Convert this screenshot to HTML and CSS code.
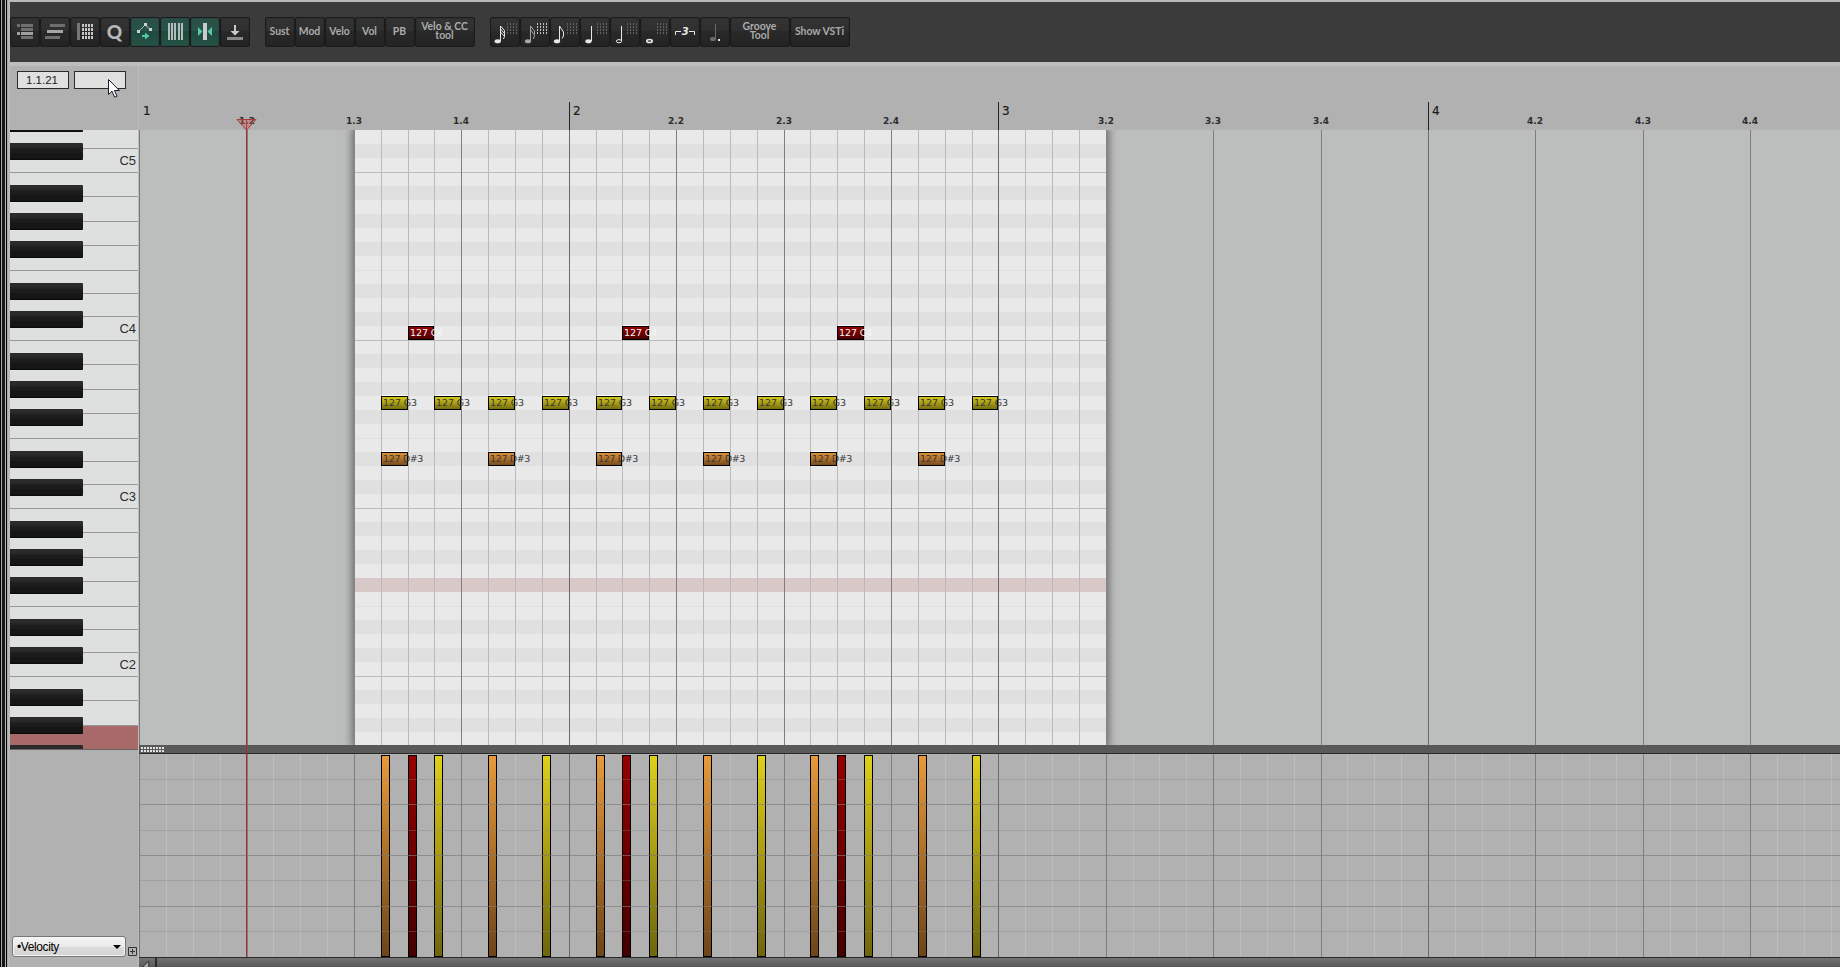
FILE: index.html
```html
<!DOCTYPE html>
<html lang="en">
<head>
  <meta charset="UTF-8">
  <title>MIDI Editor</title>
  <link rel="stylesheet" href="styles.css">
</head>
<body>
  <div class="rail"></div>
  <div class="editor">
    <div class="toolbar">
      <div class="group">
        <button class="btn icon"><svg viewBox="0 0 30 30"><path fill="#707070" d="M7 7h3v3h-3zM11 7h12v3h-12zM11 11h12v3h-12zM11 19h12v3h-12z"/><path fill="#a0a0a0" d="M7 15h3v3h-3zM11 15h12v3h-12z"/></svg></button>
        <button class="btn icon"><svg viewBox="0 0 30 30"><path fill="#6e6e6e" d="M10 7h15v3h-15zM5 19h15v3h-15z"/><path fill="#a4a4a4" d="M7 13h16v3h-16z"/></svg></button>
        <button class="btn icon"><svg viewBox="0 0 30 30"><path fill="#777" d="M7 6h3v17h-3z"/><path fill="#c8c8c8" d="M12 7h2v3h-2zM15 7h2v3h-2zM18 7h2v3h-2zM21 7h2v3h-2zM12 11h2v3h-2zM15 11h2v3h-2zM18 11h2v3h-2zM21 11h2v3h-2zM12 15h2v3h-2zM15 15h2v3h-2zM18 15h2v3h-2zM21 15h2v3h-2zM12 19h2v3h-2zM15 19h2v3h-2zM18 19h2v3h-2zM21 19h2v3h-2z"/></svg></button>
        <button class="btn quant">Q</button>
        <button class="btn icon on"><svg class="smooth" viewBox="0 0 30 30"><path fill="none" stroke="#b0b8b5" d="M8.500 14.500L15 8l6 5"/><path fill="#d0d0d0" d="M7 13h3v3h-3zM14 6h3v3h-3zM19 11h3v3h-3z"/><path fill="#58c8a8" d="M12 18h3v-2.500l4.500 3.500-4.500 3.500V20h-3z"/></svg></button>
        <button class="btn icon on"><svg viewBox="0 0 30 30"><path fill="#b4bdba" d="M8 6h2v17h-2zM11 6h2v17h-2zM14 6h2v17h-2zM18 6h2v17h-2zM21 6h2v17h-2z"/></svg></button>
        <button class="btn icon on"><svg class="smooth" viewBox="0 0 30 30"><path fill="#c8cccb" d="M13 6h4v17h-4z"/><path fill="#58c8a8" d="M8 10l4.500 4.500L8 19zM22 10l-4.500 4.500L22 19z"/></svg></button>
        <button class="btn icon"><svg class="smooth" viewBox="0 0 30 30"><path fill="#c8c8c8" d="M14 8h2v6h3.500L15 18.500 10.500 14H14z"/><path fill="#888" d="M7 20h16v3h-16z"/></svg></button>
      </div>
      <div class="group">
        <button class="btn">Sust</button>
        <button class="btn">Mod</button>
        <button class="btn">Velo</button>
        <button class="btn">Vol</button>
        <button class="btn">PB</button>
        <button class="btn wide">Velo &amp; CC<br>tool</button>
      </div>
      <div class="group">
        <button class="btn icon"><svg class="smooth" viewBox="0 0 30 30"><path class="dash" d="M17.500 6v11M20.500 6v11M23.500 6v11M26.500 6v11"/><ellipse class="head" cx="7.700" cy="24.300" rx="3.100" ry="2"/><path class="stem" d="M10.500 24V9l4 4.500v3M10.500 12l4 4.500v3M10.500 15l4 4.500-1 2.500"/></svg></button>
        <button class="btn icon"><svg class="smooth" viewBox="0 0 30 30"><path class="dash lit" d="M17.500 6v11M20.500 6v11M23.500 6v11M26.500 6v11"/><ellipse class="head dim" cx="8" cy="24.300" rx="3.100" ry="2"/><path class="stem dim" d="M10.500 24V9l4 5v3M10.500 13l4 5-1 4"/></svg></button>
        <button class="btn icon"><svg class="smooth" viewBox="0 0 30 30"><path class="dash" d="M17.500 6v11M20.500 6v11M23.500 6v11M26.500 6v11"/><ellipse class="head" cx="7" cy="24.300" rx="3.100" ry="2"/><path class="stem" d="M9.500 24V9l4 6v4l-1.500 2.500"/></svg></button>
        <button class="btn icon"><svg class="smooth" viewBox="0 0 30 30"><path class="dash" d="M17.500 6v11M20.500 6v11M23.500 6v11M26.500 6v11"/><ellipse class="head" cx="8.500" cy="24.300" rx="3.100" ry="2"/><path class="stem" d="M11.500 24V9"/></svg></button>
        <button class="btn icon"><svg class="smooth" viewBox="0 0 30 30"><path class="dash" d="M17.500 6v11M20.500 6v11M23.500 6v11M26.500 6v11"/><ellipse class="ring" cx="9" cy="24.200" rx="2.700" ry="1.600"/><path class="stem" d="M11.500 24V9"/></svg></button>
        <button class="btn icon"><svg class="smooth" viewBox="0 0 30 30"><path class="dash" d="M17.500 6v11M20.500 6v11M23.500 6v11M26.500 6v11"/><ellipse class="ring fat" cx="9.500" cy="24" rx="2.700" ry="1.500"/></svg></button>
        <button class="btn icon"><svg class="smooth" viewBox="0 0 30 30"><path class="stem" d="M5.500 18v-3.500H11M19 14.500h5.500V18"/><text x="15.200" y="18" class="three">3</text></svg></button>
        <button class="btn icon"><svg class="smooth" viewBox="0 0 30 30"><ellipse cx="13" cy="22" rx="3" ry="2" fill="#6a6a6a"/><path fill="none" stroke="#6a6a6a" d="M15.500 22V7"/><path fill="#e8e8e8" d="M18 22h2v2h-2z"/></svg></button>
        <button class="btn wide">Groove<br>Tool</button>
        <button class="btn wide">Show VSTi</button>
      </div>
    </div>

    <div class="workspace">
      <div class="side">
        <div class="readouts">
          <div class="readout">1.1.21</div>
          <div class="readout"></div>
        </div>
        <div class="keyboard" id="keyboard"></div>
        <div class="lane-controls">
          <div class="lane-select"><span>•Velocity</span><i class="caret"></i></div>
          <svg class="plus" viewBox="0 0 9 9"><path fill="none" stroke="#333" d="M.5.5h8v8h-8zM4.500 2v5M2 4.500h5"/></svg>
        </div>
      </div>
      <div class="timeline">
        <div class="ruler" id="ruler"></div>
        <div class="roll" id="roll">
          <div class="item" id="item">
            <div class="rows" id="rows"></div>
          </div>
        </div>
        <div class="splitter"><i class="grip"></i></div>
        <div class="lane" id="lane"></div>
        <div class="scrollbar"><svg class="scroll-left" viewBox="0 0 18 9"><path fill="#aaa" stroke="#2a2a2a" d="M11 3L5 8.500V10h6z"/></svg></div>
        <div class="playhead"><svg viewBox="0 0 21 12"><path fill="#cc5a5a" fill-opacity=".4" stroke="#a83c3c" d="M1 .5h19L10.500 11z"/></svg></div>
      </div>
    </div>
  </div>
  <svg class="cursor" viewBox="0 0 13 20"><path fill="#fff" stroke="#1a1a2a" d="M.5.5v15l3.500-3.300 2.600 6 2.400-1-2.600-5.700h5z"/></svg>
  <script src="script.js"></script>
</body>
</html>
```
FILE: styles.css
```css
* {
  box-sizing: border-box;
}

body {
  margin: 0;
  width: 1840px;
  height: 967px;
  display: flex;
  overflow: hidden;
  background: #b1b1b1;
  font-family: "Liberation Sans", Arial, sans-serif;
}

.rail {
  width: 10px;
  background: linear-gradient(90deg, #000 1px, #aaa 1px 2px, #161616 2px 5px, #b5b5b5 5px 6px, #000 6px 7px, #a8adad 7px 8px, #b9b9b9 8px);
}

.editor {
  flex: 1;
  display: flex;
  flex-direction: column;
  min-width: 0;
}

/* toolbar */
.toolbar {
  height: 66px;
  border-top: 2px solid #b9b9b9;
  border-bottom: 4px solid #bebebe;
  background: #3b3b3b;
  display: flex;
  align-items: center;
  gap: 15px;
}

.group {
  display: flex;
}

.btn {
  width: 30px;
  height: 30px;
  padding: 0 1px 2px 0;
  border: 1px solid #1b1b1b;
  border-radius: 2px;
  background: linear-gradient(#333 0, #2f2f2f 45%, #292929 46%, #242424);
  box-shadow: inset 0 0 1px #1b1b1b;
  color: #ababab;
  font: bold 10.4px/9px Lato, sans-serif;
  text-align: center;
  white-space: nowrap;
}

.btn.icon {
  padding: 0;
}

.btn.wide {
  width: 60px;
}

.btn.on {
  background: linear-gradient(#2a4f45, #275448 45%, #1e4a3e 46%, #265246);
}

.btn.quant {
  font-size: 19px;
  font-weight: 900;
  color: #b8b8b8;
}

.btn svg {
  display: block;
  width: 30px;
  height: 30px;
  margin: -1px;
  shape-rendering: crispEdges;
}

.btn .smooth {
  shape-rendering: auto;
}

.dash {
  stroke: #626262;
  stroke-dasharray: 2 1;
}

.dash.lit {
  stroke: #c4c4c4;
}

.head {
  fill: #e8e8e8;
}

.stem {
  fill: none;
  stroke: #e8e8e8;
}

.head.dim {
  fill: #a6a6a6;
}

.stem.dim {
  stroke: #a6a6a6;
}

.ring {
  fill: none;
  stroke: #e8e8e8;
}

.ring.fat {
  stroke-width: 1.6;
}

.three {
  fill: #e8e8e8;
  font: italic bold 10px "DejaVu Sans", sans-serif;
  text-anchor: middle;
}

/* left column */
.workspace {
  flex: 1;
  display: flex;
  min-height: 0;
}

.side {
  width: 128px;
  display: flex;
  flex-direction: column;
}

.readouts {
  height: 64px;
  display: flex;
  gap: 5px;
  padding: 5px 7px;
}

.readout {
  width: 52px;
  height: 18px;
  border: 1px solid #2a2a2a;
  background: #e0e0e0;
  color: #222;
  font-size: 11.5px;
  line-height: 17px;
  padding-right: 2px;
  text-align: center;
}

.keyboard {
  position: relative;
  height: 620px;
  overflow: hidden;
  border-bottom: 1px solid #666;
}

.key {
  background: #dee0df;
  border-bottom: 1px solid #979797;
  color: #2c2c2c;
  font-size: 13px;
  line-height: 23px;
  text-align: right;
  padding-right: 2px;
}

.key.pressed {
  background: #aa6969;
  border-color: #aa6969;
}

.black-key {
  position: absolute;
  left: 0;
  width: 73px;
  height: 17px;
  border-radius: 0 1px 1px 0;
  background: linear-gradient(#2b2b2b 0 4px, #242424 4px 6px, #1c1c1c 6px 10px, #161616 10px 15px, #080808);
}

.lane-controls {
  flex: 1;
  display: flex;
  align-items: flex-end;
  gap: 2px;
  padding: 0 0 10px 2px;
}

.lane-select {
  width: 114px;
  height: 21px;
  border: 1px solid #777;
  border-radius: 3px;
  background: linear-gradient(#f4f4f4, #eaeaea 50%, #dcdcdc 51%, #d3d3d3);
  box-shadow: inset 0 0 0 1px #f4f4f4;
  display: flex;
  align-items: center;
  justify-content: space-between;
  padding: 0 4px;
  font-size: 12px;
  letter-spacing: -0.4px;
}

.caret {
  border: 4px solid transparent;
  border-top-color: #000;
  border-bottom: 0;
}

.plus {
  width: 9px;
  height: 9px;
  margin-bottom: 1px;
}

/* right column */
.timeline {
  flex: 1;
  position: relative;
  display: flex;
  flex-direction: column;
  border-left: 1px solid #bdbdbd;
  min-width: 0;
  overflow: hidden;
}

.ruler,
.roll,
.lane {
  position: relative;
  overflow: hidden;
  border-left: 1px solid #b1b1b1;
}

.ruler {
  height: 64px;
  color: #2c2c2c;
}

.bar-label,
.beat-label {
  position: absolute;
  font-family: "DejaVu Sans", sans-serif;
}

.bar-label {
  top: 36px;
  height: 28px;
  padding-left: 3px;
  font-size: 12px;
  line-height: 18px;
  color: #1c1c1c;
  border-left: 1px solid #222;
  -webkit-text-stroke: 0.2px #1c1c1c;
}

.bar-label.first {
  border-color: transparent;
}

.beat-label {
  top: 49px;
  width: 40px;
  margin-left: -20px;
  text-align: center;
  font-size: 9px;
  font-weight: bold;
  line-height: 13px;
}

.roll {
  height: 615px;
  background: #bbbebc;
  border-color: #777;
}

.item {
  position: absolute;
  top: 0;
  bottom: 0;
  box-shadow: 0 0 0 1px #858585, 0 0 8px 3px #6a6a6a;
}

.rows {
  height: 100%;
  overflow: hidden;
}

.row {
  height: 14px;
  background: #e9e9e9;
}

.row.sharp {
  background: #e0e0e0;
}

.row.octave {
  border-top: 1px solid #bababa;
}

.row.half {
  border-top: 1px solid #e0e0e0;
}

.row.marked {
  background: #d8c8c7;
}

.line {
  position: absolute;
  top: 0;
  bottom: 0;
  width: 1px;
  background: #bababa;
}

.line.beat {
  background: #7f7f7f;
}

.line.bar {
  background: #6a6a6a;
}

.note {
  position: absolute;
  height: 14px;
  border: 1px solid #000;
  color: #383838;
  font: 9.5px/11px "DejaVu Sans", sans-serif;
  letter-spacing: -0.1px;
  padding-left: 1px;
  white-space: nowrap;
}

/* light edge over the top of each note */
.note::before {
  content: "";
  position: absolute;
  top: -2px;
  left: 0;
  right: 0;
  height: 1px;
  background: #fff;
}

.note.g3 {
  background: linear-gradient(#d6c91a, #776e10);
}

.note.ds3 {
  background: linear-gradient(#de9138, #784d1c);
  letter-spacing: -0.35px;
}

.note.c4 {
  background: linear-gradient(#920000, #4c0000);
  color: #f6f6f6;
}

.splitter {
  height: 9px;
  background: #595959;
  border-bottom: 1px solid #2b2b2b;
  padding: 2px 0 0 2px;
}

.grip {
  display: block;
  width: 24px;
  height: 6px;
  background: repeating-linear-gradient(90deg, transparent 0 2px, #595959 2px 3px), repeating-linear-gradient(#e4e4e4 0 2px, #595959 2px 3px);
}

.lane {
  height: 203px;
  border-color: #777;
}

.lane .line:not(.beat) {
  background: #bdbdbd;
}

.level {
  position: absolute;
  left: 0;
  right: 0;
  height: 1px;
  background: rgba(128, 128, 128, 0.35);
}

.level.strong {
  background: rgba(122, 122, 122, 0.65);
}

.velocity {
  position: absolute;
  top: 1px;
  bottom: 0;
  width: 9px;
  border: 1px solid #000;
}

.velocity.g3 {
  background: linear-gradient(#dfd01b, #6e650d);
}

.velocity.ds3 {
  background: linear-gradient(#e89a3a, #6d4519);
}

.velocity.c4 {
  background: linear-gradient(#960000, #430000);
}

.scrollbar {
  flex: 1;
  border-top: 1px solid #2b2b2b;
  background: linear-gradient(#727272, #58595a);
}

.scroll-left {
  display: block;
  width: 18px;
  height: 9px;
  border-right: 2px solid #2b2b2b;
}

.playhead {
  position: absolute;
  top: 53px;
  bottom: 10px;
  left: 107px;
  width: 1px;
  background: #a82c2c;
}

.playhead svg {
  position: absolute;
  left: -10px;
  top: 0;
  width: 21px;
  height: 12px;
}

.cursor {
  position: absolute;
  left: 108px;
  top: 79px;
  width: 13px;
  height: 20px;
}
```
FILE: script.js
```js
// x position of a 16th note inside the timeline
function xAt(n) {
  return Math.floor(139.635 + 26.851 * n) - 140;
}

function add(parent, className, style, text) {
  const el = document.createElement('div');
  el.className = className;
  Object.assign(el.style, style || {});
  if (text) el.textContent = text;
  parent.appendChild(el);
  return el;
}

const ruler = document.getElementById('ruler');
const roll = document.getElementById('roll');
const item = document.getElementById('item');
const rows = document.getElementById('rows');
const lane = document.getElementById('lane');
const keyboard = document.getElementById('keyboard');

const ITEM_START = 8;
const ITEM_END = 36;
const TOP_PITCH = 74;
const ROW = 14;
const SHARPS = [1, 3, 6, 8, 10];

// ruler labels
for (let n = 0; n < 64; n += 4) {
  const bar = Math.floor(n / 16) + 1;
  const beat = (n % 16) / 4 + 1;
  if (beat === 1) {
    add(ruler, n ? 'bar-label' : 'bar-label first', { left: xAt(n) + 'px' }, String(bar));
  } else {
    add(ruler, 'beat-label', { left: xAt(n) + 'px' }, bar + '.' + beat);
  }
}

// pitch rows
item.style.left = xAt(ITEM_START) + 1 + 'px';
item.style.width = xAt(ITEM_END) - xAt(ITEM_START) - 1 + 'px';
for (let pitch = TOP_PITCH; pitch > TOP_PITCH - 44; pitch--) {
  const tone = pitch % 12;
  let cls = 'row';
  if (SHARPS.includes(tone)) cls += ' sharp';
  if (tone === 11) cls += ' octave';
  if (tone === 4) cls += ' half';
  if (pitch === 42) cls += ' marked';
  add(rows, cls);
}

// vertical grid
for (let n = 1; n < 64; n++) {
  const kind = n % 16 === 0 ? ' beat bar' : n % 4 === 0 ? ' beat' : '';
  if ((kind || (n > ITEM_START && n < ITEM_END)) && n !== ITEM_START && n !== ITEM_END) {
    add(roll, 'line' + kind, { left: xAt(n) + 'px' });
  }
  add(lane, 'line' + kind, { left: xAt(n) + 'px' });
}

// notes
const notes = [
  { cls: 'g3', name: 'G3', pitch: 55, at: [9, 11, 13, 15, 17, 19, 21, 23, 25, 27, 29, 31] },
  { cls: 'ds3', name: 'D#3', pitch: 51, at: [9, 13, 17, 21, 25, 29] },
  { cls: 'c4', name: 'C4', pitch: 60, at: [10, 18, 26] }
];
notes.forEach(note => {
  note.at.forEach(n => {
    add(roll, 'note ' + note.cls, {
      left: xAt(n) + 'px',
      top: (TOP_PITCH - note.pitch) * ROW + 'px',
      width: xAt(n + 1) - xAt(n) + 'px'
    }, '127 ' + note.name);
  });
});

// velocity bars
const velocities = {
  ds3: [9, 13, 17, 21, 25, 29],
  c4: [10, 18, 26],
  g3: [11, 15, 19, 23, 27, 31]
};
Object.keys(velocities).forEach(cls => {
  velocities[cls].forEach(n => add(lane, 'velocity ' + cls, { left: xAt(n) + 'px' }));
});

[25, 50, 76, 101, 126, 152, 177].forEach((y, i) => {
  add(lane, i % 2 ? 'level strong' : 'level', { top: y + 'px' });
});

// white keys, top to bottom
const octave = [24, 25, 24, 25, 23, 23, 24];
const heights = [19, 24].concat(octave, octave, octave, [24, 25, 24]);
heights.forEach((h, i) => {
  const isC = i % 7 === 1;
  const cls = i === heights.length - 1 ? 'key pressed' : 'key';
  add(keyboard, cls, { height: h + 'px' }, isC ? 'C' + (5 - (i - 1) / 7) : '');
});

// black keys
for (let pitch = TOP_PITCH + 1; pitch > TOP_PITCH - 45; pitch--) {
  if (SHARPS.includes(pitch % 12)) {
    add(keyboard, 'black-key', { top: (TOP_PITCH - pitch) * ROW - 1 + 'px' });
  }
}
```
